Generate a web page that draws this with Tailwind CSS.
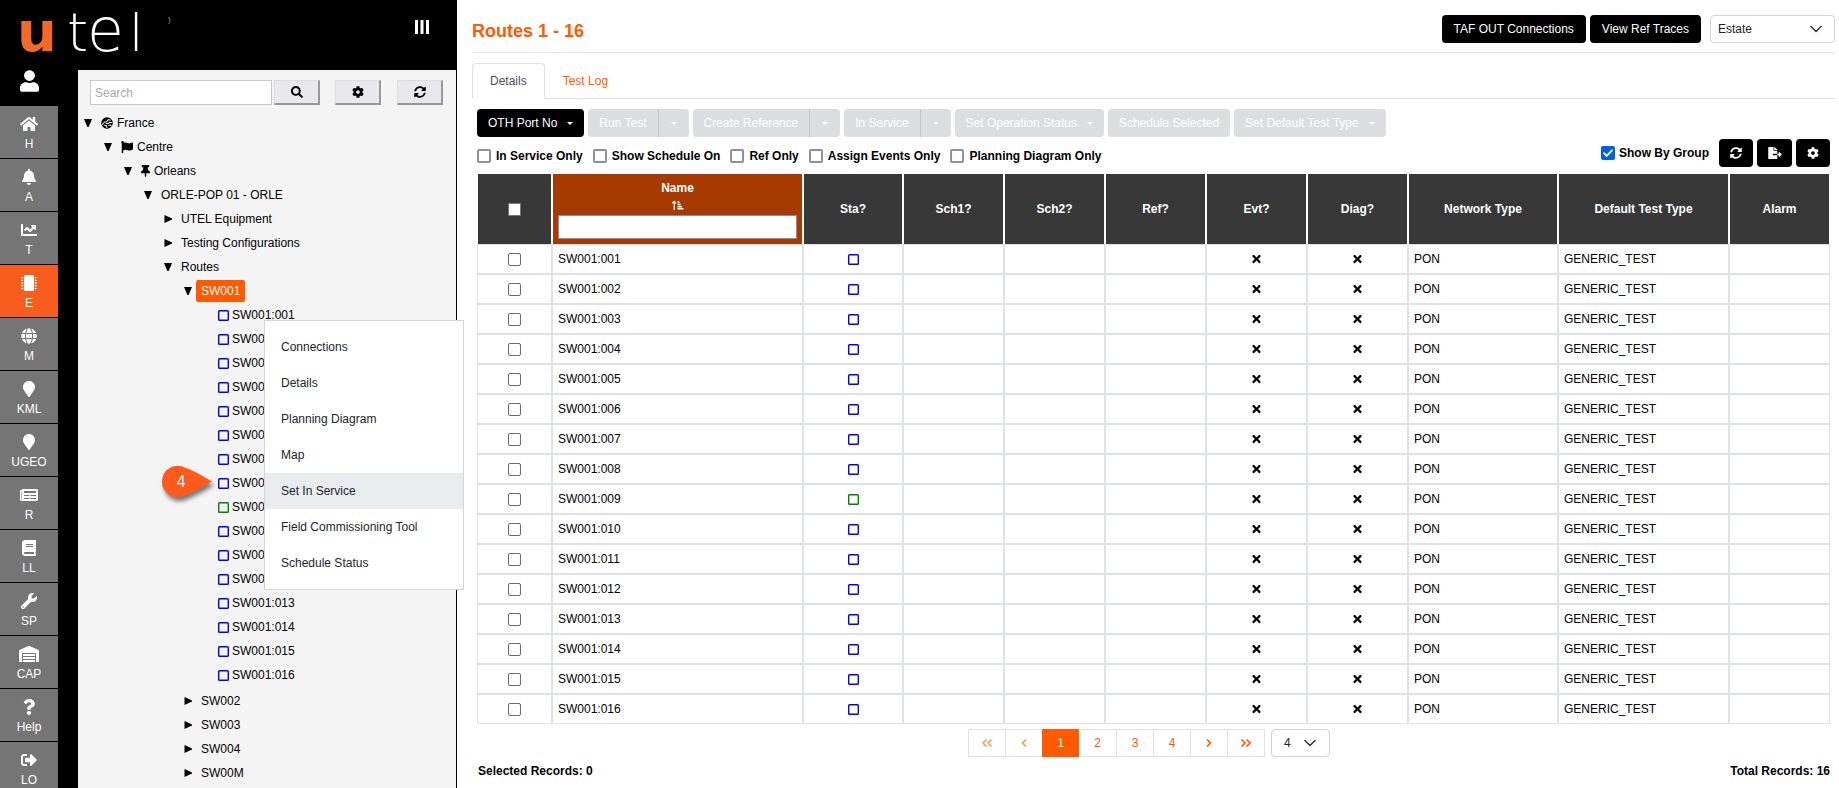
<!DOCTYPE html>
<html lang="en">
<head>
    <meta charset="UTF-8">
    <meta name="viewport" content="width=device-width, initial-scale=1.0">
    <title>utel - Routes</title>
    <script src="https://cdn.jsdelivr.net/npm/@tailwindcss/browser@4"></script>
</head>
<body class="relative flex h-screen overflow-hidden bg-white font-['Liberation_Sans',Arial,sans-serif] text-xs text-black">

    <!-- Icon sprite -->
    <svg class="hidden">
        <symbol id="i-user" viewBox="0 0 448 512"><path d="M224 256c70.7 0 128-57.3 128-128S294.7 0 224 0 96 57.3 96 128s57.3 128 128 128zm89.6 32h-16.7c-22.2 10.2-46.9 16-72.9 16s-50.6-5.8-72.9-16h-16.7C60.2 288 0 348.2 0 422.4V464c0 26.5 21.5 48 48 48h352c26.5 0 48-21.5 48-48v-41.6c0-74.2-60.2-134.4-134.4-134.4z"/></symbol>
        <symbol id="i-home" viewBox="0 0 576 512"><path d="M280.37 148.26L96 300.11V464a16 16 0 0 0 16 16l112.06-.29a16 16 0 0 0 15.92-16V368a16 16 0 0 1 16-16h64a16 16 0 0 1 16 16v95.64a16 16 0 0 0 16 16.05L464 480a16 16 0 0 0 16-16V300L295.67 148.26a12.19 12.19 0 0 0-15.3 0zM571.6 251.47L488 182.56V44.05a12 12 0 0 0-12-12h-56a12 12 0 0 0-12 12v72.61L318.47 43a48 48 0 0 0-61 0L4.34 251.47a12 12 0 0 0-1.6 16.9l25.5 31A12 12 0 0 0 45.15 301l235.22-193.74a12.19 12.19 0 0 1 15.3 0L530.9 301a12 12 0 0 0 16.9-1.6l25.5-31a12 12 0 0 0-1.7-16.93z"/></symbol>
        <symbol id="i-bell" viewBox="0 0 448 512"><path d="M224 512c35.32 0 63.97-28.65 63.97-64H160.03c0 35.35 28.65 64 63.97 64zm215.39-149.71c-19.32-20.76-55.47-51.99-55.47-154.29 0-77.7-54.48-139.9-127.94-155.16V32c0-17.67-14.32-32-31.98-32s-31.98 14.33-31.98 32v20.84C118.56 68.1 64.08 130.3 64.08 208c0 102.3-36.15 133.53-55.47 154.29-6 6.45-8.66 14.16-8.61 21.71.11 16.4 12.98 32 32.1 32h383.8c19.12 0 32-15.6 32.1-32 .05-7.55-2.61-15.27-8.61-21.71z"/></symbol>
        <symbol id="i-chart" viewBox="0 0 512 512"><path d="M496 384H64V80c0-8.84-7.16-16-16-16H16C7.16 64 0 71.16 0 80v336c0 17.67 14.33 32 32 32h464c8.84 0 16-7.16 16-16v-32c0-8.84-7.16-16-16-16zM464 96H345.94c-21.38 0-32.09 25.85-16.97 40.97l32.4 32.4L288 242.75l-73.37-73.37c-12.5-12.5-32.76-12.5-45.25 0l-68.69 68.69c-6.25 6.25-6.25 16.38 0 22.63l22.62 22.62c6.25 6.25 16.38 6.25 22.63 0L192 237.25l73.37 73.37c12.5 12.5 32.76 12.5 45.25 0l96-96 32.4 32.4c15.12 15.12 40.97 4.41 40.97-16.97V112c.01-8.84-7.15-16-15.99-16z"/></symbol>
        <symbol id="i-chip" viewBox="0 0 512 512"><rect x="96" width="320" height="512" rx="48"/><path d="M24 60h48v42H24v-8H0V68h24zm0 88h48v42H24v-8H0v-26h24zm0 87h48v42H24v-8H0v-26h24zm0 87h48v42H24v-8H0v-26h24zm0 88h48v42H24v-8H0v-26h24zM488 60h-48v42h48v-8h24V68h-24zm0 88h-48v42h48v-8h24v-26h-24zm0 87h-48v42h48v-8h24v-26h-24zm0 87h-48v42h48v-8h24v-26h-24zm0 88h-48v42h48v-8h24v-26h-24z"/></symbol>
        <symbol id="i-globe" viewBox="0 0 496 512"><path d="M336.5 160C322 70.7 287.8 8 248 8s-74 62.7-88.5 152h177zM152 256c0 22.2 1.2 43.5 3.3 64h185.3c2.1-20.5 3.3-41.8 3.3-64s-1.2-43.5-3.3-64H155.3c-2.1 20.5-3.3 41.8-3.3 64zm324.7-96c-28.6-67.9-86.5-120.4-158-141.6 24.4 33.8 41.2 84.7 50 141.6h108zM177.2 18.4C105.8 39.6 47.8 92.1 19.3 160h108c8.7-56.9 25.5-107.8 49.9-141.6zM487.4 192H372.7c2.1 21 3.3 42.5 3.3 64s-1.2 43-3.3 64h114.6c5.5-20.5 8.6-41.8 8.6-64s-3.1-43.5-8.5-64zM120 256c0-21.5 1.2-43 3.3-64H8.6C3.2 212.5 0 233.8 0 256s3.2 43.5 8.6 64h114.6c-2-21-3.2-42.5-3.2-64zm39.5 96c14.5 89.3 48.7 152 88.5 152s74-62.7 88.5-152h-177zm159.3 141.6c71.4-21.2 129.4-73.7 158-141.6h-108c-8.8 56.9-25.6 107.8-50 141.6zM19.3 352c28.6 67.9 86.5 120.4 158 141.6-24.4-33.8-41.2-84.7-50-141.6h-108z"/></symbol>
        <symbol id="i-marker" viewBox="0 0 384 512"><path d="M172.268 501.67C26.97 291.031 0 269.413 0 192 0 85.961 85.961 0 192 0s192 85.961 192 192c0 77.413-26.97 99.031-172.268 309.67-9.535 13.774-29.93 13.773-39.464 0z"/></symbol>
        <symbol id="i-news" viewBox="0 0 576 512"><path d="M552 64H88c-13.255 0-24 10.745-24 24v8H24c-13.255 0-24 10.745-24 24v272c0 30.928 25.072 56 56 56h472c26.51 0 48-21.49 48-48V88c0-13.255-10.745-24-24-24zM56 400a8 8 0 0 1-8-8V144h16v248a8 8 0 0 1-8 8zm236-16H140c-6.627 0-12-5.373-12-12v-8c0-6.627 5.373-12 12-12h152c6.627 0 12 5.373 12 12v8c0 6.627-5.373 12-12 12zm208 0H348c-6.627 0-12-5.373-12-12v-8c0-6.627 5.373-12 12-12h152c6.627 0 12 5.373 12 12v8c0 6.627-5.373 12-12 12zm-208-96H140c-6.627 0-12-5.373-12-12v-8c0-6.627 5.373-12 12-12h152c6.627 0 12 5.373 12 12v8c0 6.627-5.373 12-12 12zm208 0H348c-6.627 0-12-5.373-12-12v-8c0-6.627 5.373-12 12-12h152c6.627 0 12 5.373 12 12v8c0 6.627-5.373 12-12 12zm0-96H140c-6.627 0-12-5.373-12-12v-40c0-6.627 5.373-12 12-12h360c6.627 0 12 5.373 12 12v40c0 6.627-5.373 12-12 12z"/></symbol>
        <symbol id="i-book" viewBox="0 0 448 512"><path d="M448 360V24c0-13.3-10.7-24-24-24H96C43 0 0 43 0 96v320c0 53 43 96 96 96h328c13.3 0 24-10.7 24-24v-16c0-7.5-3.5-14.3-8.9-18.7-4.2-15.4-4.2-59.3 0-74.7 5.4-4.3 8.9-11.1 8.9-18.6zM128 134c0-3.3 2.7-6 6-6h212c3.3 0 6 2.7 6 6v20c0 3.3-2.7 6-6 6H134c-3.3 0-6-2.7-6-6v-20zm0 64c0-3.3 2.7-6 6-6h212c3.3 0 6 2.7 6 6v20c0 3.3-2.7 6-6 6H134c-3.3 0-6-2.7-6-6v-20zm253.4 250H96c-17.7 0-32-14.3-32-32 0-17.6 14.4-32 32-32h285.4c-1.9 17.1-1.9 46.9 0 64z"/></symbol>
        <symbol id="i-wrench" viewBox="0 0 512 512"><path d="M507.73 109.1c-2.24-9.03-13.54-12.09-20.12-5.51l-74.36 74.36-67.88-11.31-11.31-67.88 74.36-74.36c6.62-6.62 3.43-17.9-5.66-20.16-47.38-11.74-99.55.91-136.58 37.93-39.64 39.64-50.55 97.1-34.05 147.2L18.74 402.76c-24.99 24.99-24.99 65.51 0 90.5 24.99 24.99 65.51 24.99 90.5 0l213.21-213.21c50.12 16.71 107.47 5.68 147.37-34.22 37.07-37.07 49.7-89.32 37.91-136.73zM64 472c-13.25 0-24-10.75-24-24 0-13.26 10.75-24 24-24s24 10.74 24 24c0 13.25-10.75 24-24 24z"/></symbol>
        <symbol id="i-warehouse" viewBox="0 0 640 512"><path d="M504 352H136.4c-4.4 0-8 3.6-8 8l-.1 48c0 4.4 3.6 8 8 8H504c4.4 0 8-3.6 8-8v-48c0-4.4-3.6-8-8-8zm0 96H136.1c-4.4 0-8 3.6-8 8l-.1 48c0 4.4 3.6 8 8 8h368c4.4 0 8-3.6 8-8v-48c0-4.4-3.6-8-8-8zm0-192H136.6c-4.4 0-8 3.6-8 8l-.1 48c0 4.4 3.6 8 8 8H504c4.4 0 8-3.6 8-8v-48c0-4.4-3.6-8-8-8zm106.5-139L338.4 3.7a48.15 48.15 0 0 0-36.9 0L29.5 117C11.7 124.5 0 141.9 0 161.3V504c0 4.4 3.6 8 8 8h80c4.4 0 8-3.6 8-8V256c0-17.6 14.6-32 32.6-32h382.8c18 0 32.6 14.4 32.6 32v248c0 4.4 3.6 8 8 8h80c4.4 0 8-3.6 8-8V161.3c0-19.4-11.7-36.8-29.5-44.3z"/></symbol>
        <symbol id="i-question" viewBox="0 0 384 512"><path d="M202.021 0C122.202 0 70.503 32.703 29.914 91.026c-7.363 10.58-5.093 25.086 5.178 32.874l43.138 32.709c10.373 7.865 25.132 6.026 33.253-4.148 25.049-31.381 43.63-49.449 82.757-49.449 30.764 0 68.816 19.799 68.816 49.631 0 22.552-18.617 34.134-48.993 51.164-35.423 19.86-82.299 44.576-82.299 106.405V320c0 13.255 10.745 24 24 24h72.471c13.255 0 24-10.745 24-24v-5.773c0-42.86 125.268-44.645 125.268-160.627C377.504 66.256 286.902 0 202.021 0zM192 373.459c-38.196 0-69.271 31.075-69.271 69.271 0 38.195 31.075 69.27 69.271 69.27s69.271-31.075 69.271-69.271-31.075-69.27-69.271-69.27z"/></symbol>
        <symbol id="i-logout" viewBox="0 0 512 512"><path d="M497 273L329 441c-15 15-41 4.5-41-17v-96H152c-13.3 0-24-10.7-24-24v-96c0-13.3 10.7-24 24-24h136V88c0-21.4 25.9-32 41-17l168 168c9.3 9.4 9.3 24.6 0 34zM192 436v-40c0-6.6-5.4-12-12-12H96c-17.7 0-32-14.3-32-32V160c0-17.7 14.3-32 32-32h84c6.6 0 12-5.4 12-12V76c0-6.6-5.4-12-12-12H96c-53 0-96 43-96 96v192c0 53 43 96 96 96h84c6.6 0 12-5.4 12-12z"/></symbol>
        <symbol id="i-search" viewBox="0 0 512 512"><path d="M505 442.7L405.3 343c-4.5-4.5-10.6-7-17-7H372c27.6-35.3 44-79.7 44-128C416 93.1 322.9 0 208 0S0 93.1 0 208s93.1 208 208 208c48.3 0 92.7-16.4 128-44v16.3c0 6.4 2.5 12.5 7 17l99.7 99.7c9.4 9.4 24.6 9.4 33.9 0l28.3-28.3c9.4-9.4 9.4-24.6.1-34zM208 336c-70.7 0-128-57.2-128-128 0-70.7 57.2-128 128-128 70.7 0 128 57.2 128 128 0 70.7-57.2 128-128 128z"/></symbol>
        <symbol id="i-cog" viewBox="0 0 512 512"><path d="M487.4 315.7l-42.6-24.6c4.3-23.2 4.3-47 0-70.2l42.6-24.6c4.9-2.8 7.1-8.6 5.5-14-11.1-35.6-30-67.8-54.7-94.6-3.8-4.1-10-5.1-14.8-2.3L380.8 110c-17.9-15.4-38.5-27.3-60.8-35.1V25.8c0-5.6-3.9-10.5-9.4-11.7-36.7-8.2-74.3-7.8-109.2 0-5.5 1.2-9.4 6.1-9.4 11.7V75c-22.2 7.9-42.8 19.8-60.8 35.1L88.7 85.5c-4.9-2.8-11-1.9-14.8 2.3-24.7 26.7-43.6 58.9-54.7 94.6-1.7 5.4.6 11.2 5.5 14L67.3 221c-4.3 23.2-4.3 47 0 70.2l-42.6 24.6c-4.9 2.8-7.1 8.6-5.5 14 11.1 35.6 30 67.8 54.7 94.6 3.8 4.1 10 5.1 14.8 2.3l42.6-24.6c17.9 15.4 38.5 27.3 60.8 35.1v49.2c0 5.6 3.9 10.5 9.4 11.7 36.7 8.2 74.3 7.8 109.2 0 5.5-1.2 9.4-6.1 9.4-11.7v-49.2c22.2-7.9 42.8-19.8 60.8-35.1l42.6 24.6c4.9 2.8 11 1.9 14.8-2.3 24.7-26.7 43.6-58.9 54.7-94.6 1.5-5.5-.7-11.3-5.6-14.1zM256 336c-44.1 0-80-35.9-80-80s35.9-80 80-80 80 35.9 80 80-35.9 80-80 80z"/></symbol>
        <symbol id="i-sync" viewBox="0 0 512 512"><path d="M370.72 133.28C339.458 104.008 298.888 87.962 255.848 88c-77.458.068-144.328 53.178-162.791 126.85-1.344 5.363-6.122 9.15-11.651 9.15H24.103c-7.498 0-13.194-6.807-11.807-14.176C33.933 94.924 134.813 8 256 8c66.448 0 126.791 26.136 171.315 68.685L463.03 40.97C478.149 25.851 504 36.559 504 57.941V192c0 13.255-10.745 24-24 24H345.941c-21.382 0-32.09-25.851-16.971-40.971l41.75-41.749zM32 296h134.059c21.382 0 32.09 25.851 16.971 40.971l-41.75 41.75c31.262 29.273 71.835 45.319 114.876 45.28 77.418-.07 144.315-53.144 162.787-126.849 1.344-5.363 6.122-9.15 11.651-9.15h57.304c7.498 0 13.194 6.807 11.807 14.176C478.067 417.076 377.187 504 256 504c-66.448 0-126.791-26.136-171.315-68.685L48.97 471.03C33.851 486.149 8 475.441 8 454.059V320c0-13.255 10.745-24 24-24z"/></symbol>
        <symbol id="i-export" viewBox="0 0 576 512"><path d="M224 136V0H24C10.700 0 0 10.700 0 24v464c0 13.300 10.700 24 24 24h336c13.300 0 24-10.700 24-24V352H216c-13.300 0-24-10.700-24-24v-16c0-13.300 10.700-24 24-24h168V160H248c-13.200 0-24-10.800-24-24zm160-14.100c0-6.300-2.500-12.400-7-16.900L279.100 7c-4.500-4.500-10.600-7-17-7H256v128h128zM571 308l-95.700-96.400c-10.100-10.100-27.400-3-27.400 11.300V288h-64v64h64v65.200c0 14.300 17.300 21.400 27.400 11.300L571 332c6.600-6.600 6.600-17.400 0-24z"/></symbol>
        <symbol id="i-pin" viewBox="0 0 384 512"><path d="M298.028 214.267L285.793 96H328c13.255 0 24-10.745 24-24V24c0-13.255-10.745-24-24-24H56C42.745 0 32 10.745 32 24v48c0 13.255 10.745 24 24 24h42.207L85.972 214.267C37.465 236.82 0 277.261 0 328c0 13.255 10.745 24 24 24h136v104.007c0 1.242.289 2.467.845 3.578l24 48c2.941 5.882 11.364 5.893 14.311 0l24-48a8.008 8.008 0 0 0 .845-3.578V352h136c13.255 0 24-10.745 24-24-.001-51.183-37.983-91.42-85.973-113.733z"/></symbol>
        <symbol id="i-flag" viewBox="0 0 512 512"><path d="M349.565 98.783C295.978 98.783 251.721 64 184.348 64c-24.955 0-47.309 4.384-68.045 12.013a55.947 55.947 0 0 0 3.586-23.562C118.117 24.015 94.806 1.206 66.338.048 34.345-1.254 8 24.296 8 56c0 19.026 9.497 35.825 24 45.945V488c0 13.255 10.745 24 24 24h16c13.255 0 24-10.745 24-24v-94.4c28.311-12.064 63.582-22.122 114.435-22.122 53.588 0 97.844 34.783 165.217 34.783 48.169 0 86.667-16.294 122.505-40.858C506.84 359.452 512 349.571 512 339.045v-243.1c0-23.393-24.269-38.87-45.485-29.016-34.338 15.948-76.454 31.854-116.95 31.854z"/></symbol>
        <symbol id="i-earth" viewBox="0 0 12 12"><circle cx="6" cy="6" r="5.800"/><path d="M1.500 7.500l2-2.500 2.200-.2L7 2.800l2.300.2M5 6.300l2.500.2 1.200-1.300 2 .3M3.500 8.200l1.800.3.500 2M7.800 8.200l2.200.2" fill="none" stroke="#f4f4f4" stroke-width="1.100" stroke-linecap="round" stroke-linejoin="round"/></symbol>
        <symbol id="i-times" viewBox="0 0 352 512"><path d="M242.72 256l100.07-100.07c12.28-12.28 12.28-32.19 0-44.48l-22.24-22.24c-12.28-12.28-32.19-12.28-44.48 0L176 189.28 75.93 89.21c-12.28-12.28-32.19-12.28-44.48 0L9.21 111.45c-12.28 12.28-12.28 32.19 0 44.48L109.28 256 9.21 356.07c-12.28 12.28-12.28 32.19 0 44.48l22.24 22.24c12.28 12.28 32.2 12.28 44.48 0L176 322.72l100.07 100.07c12.28 12.28 32.2 12.28 44.48 0l22.24-22.24c12.28-12.28 12.28-32.19 0-44.48L242.72 256z"/></symbol>
        <symbol id="i-square" viewBox="0 0 11 11"><rect x=".7" y=".7" width="9.600" height="9.600" rx=".8" fill="none" stroke="currentColor" stroke-width="1.400"/></symbol>
        <symbol id="i-caret" viewBox="0 0 6 3"><path d="M0 0h6L3 3z"/></symbol>
        <symbol id="i-open" viewBox="0 0 8 8"><path d="M0 0h8L4.600 8H3.400z"/></symbol>
        <symbol id="i-closed" viewBox="0 0 8 8"><path d="M.5 0L8 3.500v1L.5 8z"/></symbol>
        <symbol id="i-chevron" viewBox="0 0 12 8"><path d="M1 1.500l5 5 5-5" fill="none" stroke="#343a40" stroke-width="1.600" stroke-linecap="round" stroke-linejoin="round"/></symbol>
        <symbol id="i-sort" viewBox="0 0 12 10"><path d="M2.200 10V1.500M.4 3.300l1.800-2 1.800 2" fill="none" stroke="currentColor" stroke-width="1.200"/><path d="M5.500 1.500H7.500V3h-2zM5.500 3.700h3.200v1.500H5.500zM5.500 5.900h4.500v1.500H5.500zM5.500 8.100h6v1.500h-6z"/></symbol>
        <symbol id="i-left" viewBox="0 0 10 8"><path d="M7 .5L3.500 4 7 7.500" fill="none" stroke="currentColor" stroke-width="1.400"/></symbol>
        <symbol id="i-right" viewBox="0 0 10 8"><path d="M3 .5L6.500 4 3 7.500" fill="none" stroke="currentColor" stroke-width="1.600"/></symbol>
        <symbol id="i-first" viewBox="0 0 10 8"><path d="M4.500 .5L1 4l3.500 3.500M9.500 .5L6 4l3.500 3.500" fill="none" stroke="currentColor" stroke-width="1.400"/></symbol>
        <symbol id="i-last" viewBox="0 0 10 8"><path d="M.5 .5L4 4 .5 7.500M5.500 .5L9 4 5.500 7.500" fill="none" stroke="currentColor" stroke-width="1.600"/></symbol>
    </svg>

    <!-- Left side -->
    <aside class="flex w-[457px] shrink-0 flex-col overflow-hidden bg-black pr-px">
        <header class="flex h-[70px] shrink-0 items-start justify-between pr-[27px]">
            <div class="flex">
                <svg class="h-[70px] w-[168px] overflow-visible" role="img" aria-label="utel">
                    <text x="17" y="51" fill="#f26a25" font-family="DejaVu Sans" font-size="56" font-weight="700">u</text>
                    <text x="67" y="51" fill="#ffffff" font-family="DejaVu Sans" font-size="54" font-weight="200">t</text>
                    <text x="87" y="51" fill="#ffffff" font-family="DejaVu Sans" font-size="60" font-weight="200">e</text>
                    <text x="129" y="51" fill="#ffffff" font-family="DejaVu Sans" font-size="52" font-weight="200">l</text>
                </svg>
                <span class="mt-4 text-[8px] leading-none text-gray-400">)</span>
            </div>
            <button class="mt-5" aria-label="Toggle menu">
                <svg class="h-[14px] w-[14px] fill-white" viewBox="0 0 14 14"><path d="M0 0h3v14H0zM5.500 0h3v14h-3zM11 0h3v14h-3z"/></svg>
            </button>
        </header>
        <div class="flex min-h-0 flex-1">
            <nav id="nav" class="flex w-[58px] shrink-0 flex-col gap-px text-white">
                <a href="#" class="flex h-[35px] shrink-0 justify-center" aria-label="User"><svg class="h-[22px] w-[19px] fill-white"><use href="#i-user"/></svg></a>
            </nav>
            <section class="ml-5 flex-1 overflow-hidden bg-[#f4f4f4] pt-[10px]">
                <form class="flex h-[25px] pr-[13px] pl-3">
                    <input type="text" placeholder="Search" aria-label="Search" class="min-w-0 flex-1 border border-[#c8c8c8] bg-white px-1 placeholder:text-[#a9a9a9]">
                    <button type="button" aria-label="Search" class="ml-[2px] flex w-[46px] items-center justify-center border-t border-r-2 border-b-2 border-l border-t-[#dcdce0] border-r-[#98989c] border-b-[#98989c] border-l-[#dcdce0] bg-[#e9e9ed]"><svg class="h-3 w-3"><use href="#i-search"/></svg></button>
                    <button type="button" aria-label="Settings" class="ml-[15px] flex w-[46px] items-center justify-center border-t border-r-2 border-b-2 border-l border-t-[#dcdce0] border-r-[#98989c] border-b-[#98989c] border-l-[#dcdce0] bg-[#e9e9ed]"><svg class="h-3 w-3"><use href="#i-cog"/></svg></button>
                    <button type="button" aria-label="Refresh" class="ml-4 flex w-[46px] items-center justify-center border-t border-r-2 border-b-2 border-l border-t-[#dcdce0] border-r-[#98989c] border-b-[#98989c] border-l-[#dcdce0] bg-[#e9e9ed]"><svg class="h-3 w-3"><use href="#i-sync"/></svg></button>
                </form>
                <!-- Tree -->
                <ul class="mt-[6px] pl-[6px] leading-6 [&_ul]:pl-5">
                    <li>
                        <div class="flex h-6 items-center"><svg class="h-2 w-2"><use href="#i-open"/></svg><svg class="mr-1 ml-[9px] h-3 w-3"><use href="#i-earth"/></svg>France</div>
                        <ul>
                            <li>
                                <div class="flex h-6 items-center"><svg class="h-2 w-2"><use href="#i-open"/></svg><svg class="mr-1 ml-[9px] h-3 w-3"><use href="#i-flag"/></svg>Centre</div>
                                <ul>
                                    <li>
                                        <div class="flex h-6 items-center"><svg class="h-2 w-2"><use href="#i-open"/></svg><svg class="mr-1 ml-[9px] h-3 w-[9px]"><use href="#i-pin"/></svg>Orleans</div>
                                        <ul>
                                            <li>
                                                <div class="flex h-6 items-center gap-[9px]"><svg class="h-2 w-2"><use href="#i-open"/></svg>ORLE-POP 01 - ORLE</div>
                                                <ul>
                                                    <li class="flex h-6 items-center gap-[9px]"><svg class="h-2 w-2"><use href="#i-closed"/></svg>UTEL Equipment</li>
                                                    <li class="flex h-6 items-center gap-[9px]"><svg class="h-2 w-2"><use href="#i-closed"/></svg>Testing Configurations</li>
                                                    <li>
                                                        <div class="flex h-6 items-center gap-[9px]"><svg class="h-2 w-2"><use href="#i-open"/></svg>Routes</div>
                                                        <ul id="switches">
                                                            <li class="mb-[2px]">
                                                                <div class="flex h-6 items-center gap-1"><svg class="h-2 w-2"><use href="#i-open"/></svg><span class="rounded-xs bg-[#ff5a00] px-[5px] leading-[22px] text-white">SW001</span></div>
                                                                <div id="routes" class="pl-[34px]"></div>
                                                            </li>
                                                        </ul>
                                                    </li>
                                                </ul>
                                            </li>
                                        </ul>
                                    </li>
                                </ul>
                            </li>
                        </ul>
                    </li>
                </ul>
            </section>
        </div>
    </aside>

    <!-- Right side -->
    <main class="min-w-0 flex-1 pr-1 pl-[15px]">
        <div class="flex h-[53px] items-start border-b border-[#e9e9e9] pt-[15px]">
            <h1 class="mr-auto text-lg leading-8 font-bold text-[#ff5a00]">Routes 1 - 16</h1>
            <button class="h-7 rounded bg-black px-3 text-white">TAF OUT Connections</button>
            <button class="ml-1 h-7 rounded bg-black px-3 text-white">View Ref Traces</button>
            <div class="relative ml-[9px] w-[125px]">
                <select aria-label="View" class="h-7 w-full appearance-none rounded border border-[#ced4da] bg-white px-[7px] text-[#212529]"><option>Estate</option></select>
                <svg class="pointer-events-none absolute top-[10px] right-[13px] h-2 w-3"><use href="#i-chevron"/></svg>
            </div>
        </div>

        <div class="mt-[10px] flex h-9 border-b border-[#dee2e6]" role="tablist">
            <a href="#" class="-mb-px rounded-t border border-[#dee2e6] border-b-white bg-white px-[17px] leading-[34px] text-[#495057]">Details</a>
            <a href="#" class="border border-transparent px-[17px] leading-[34px] text-[#ff5a00]">Test Log</a>
        </div>

        <div class="px-[5px] pt-[10px]">
            <div class="flex gap-1 text-white">
                <button class="flex h-7 items-center gap-[10px] rounded bg-black px-[11px]">OTH Port No <svg class="h-[3px] w-[6px] fill-white"><use href="#i-caret"/></svg></button>
                <div class="flex">
                    <button disabled class="h-7 rounded-l bg-[#dcdddf] px-[11px]">Run Test</button>
                    <button disabled aria-label="Run test options" class="flex h-7 w-[31px] items-center justify-center rounded-r border-l border-[#c3c5c8] bg-[#dcdddf]"><svg class="h-[3px] w-[6px] fill-white"><use href="#i-caret"/></svg></button>
                </div>
                <div class="flex">
                    <button disabled class="h-7 rounded-l bg-[#dcdddf] px-[11px]">Create Reference</button>
                    <button disabled aria-label="Create reference options" class="flex h-7 w-[31px] items-center justify-center rounded-r border-l border-[#c3c5c8] bg-[#dcdddf]"><svg class="h-[3px] w-[6px] fill-white"><use href="#i-caret"/></svg></button>
                </div>
                <div class="flex">
                    <button disabled class="h-7 rounded-l bg-[#dcdddf] px-[11px]">In Service</button>
                    <button disabled aria-label="In service options" class="flex h-7 w-[31px] items-center justify-center rounded-r border-l border-[#c3c5c8] bg-[#dcdddf]"><svg class="h-[3px] w-[6px] fill-white"><use href="#i-caret"/></svg></button>
                </div>
                <button disabled class="flex h-7 items-center gap-[10px] rounded bg-[#dcdddf] px-[11px]">Set Operation Status <svg class="h-[3px] w-[6px] fill-white"><use href="#i-caret"/></svg></button>
                <button disabled class="h-7 rounded bg-[#dcdddf] px-[11px]">Schedule Selected</button>
                <button disabled class="flex h-7 items-center gap-[10px] rounded bg-[#dcdddf] px-[11px]">Set Default Test Type <svg class="h-[3px] w-[6px] fill-white"><use href="#i-caret"/></svg></button>
            </div>

            <div class="mt-[2px] flex h-7 items-center font-bold">
                <div class="mr-auto flex gap-[10px] pt-[6px]">
                    <label class="flex items-center gap-[5px]"><input type="checkbox" class="h-[14px] w-[14px] appearance-none rounded-xs border-2 border-[#8f8f9d] bg-white">In Service Only</label>
                    <label class="flex items-center gap-[5px]"><input type="checkbox" class="h-[14px] w-[14px] appearance-none rounded-xs border-2 border-[#8f8f9d] bg-white">Show Schedule On</label>
                    <label class="flex items-center gap-[5px]"><input type="checkbox" class="h-[14px] w-[14px] appearance-none rounded-xs border-2 border-[#8f8f9d] bg-white">Ref Only</label>
                    <label class="flex items-center gap-[5px]"><input type="checkbox" class="h-[14px] w-[14px] appearance-none rounded-xs border-2 border-[#8f8f9d] bg-white">Assign Events Only</label>
                    <label class="flex items-center gap-[5px]"><input type="checkbox" class="h-[14px] w-[14px] appearance-none rounded-xs border-2 border-[#8f8f9d] bg-white">Planning Diagram Only</label>
                </div>
                <label class="mr-[10px] flex items-center gap-1">
                    <span class="relative flex">
                        <input type="checkbox" checked class="h-[14px] w-[14px] appearance-none rounded-xs bg-[#0060df]">
                        <svg class="pointer-events-none absolute top-0 left-0 h-[14px] w-[14px]" viewBox="0 0 14 14"><path d="M3 7.200l2.700 2.700L11 4.300" fill="none" stroke="#fff" stroke-width="1.800" stroke-linecap="round"/></svg>
                    </span>
                    Show By Group
                </label>
                <div class="flex gap-1">
                    <button aria-label="Refresh" class="flex h-7 w-[34px] items-center justify-center rounded bg-black"><svg class="h-3 w-3 fill-white"><use href="#i-sync"/></svg></button>
                    <button aria-label="Export" class="flex h-7 w-[35px] items-center justify-center rounded bg-black"><svg class="h-3 w-[14px] fill-white"><use href="#i-export"/></svg></button>
                    <button aria-label="Settings" class="flex h-7 w-[34px] items-center justify-center rounded bg-black"><svg class="h-3 w-3 fill-white"><use href="#i-cog"/></svg></button>
                </div>
            </div>

            <table class="mt-[7px] w-full table-fixed border-separate border-spacing-0">
                <colgroup>
                    <col class="w-[75px]"><col class="w-[251px]"><col class="w-[100px]"><col class="w-[101px]"><col class="w-[101px]"><col class="w-[101px]"><col class="w-[101px]"><col class="w-[101px]"><col class="w-[150px]"><col class="w-[171px]"><col class="w-[101px]">
                </colgroup>
                <thead>
                    <tr class="h-[70px] text-white [&>th]:border-x [&>th]:border-white">
                        <th class="bg-[#383838]"><input type="checkbox" aria-label="Select all" class="mx-auto block h-[13px] w-[13px] appearance-none border border-[#767676] bg-white"></th>
                        <th class="bg-[#a73a00] px-[5px] pt-[7px] pb-[5px] leading-[14px]">
                            Name
                            <svg class="mx-auto mt-[5px] h-[10px] w-3 fill-white"><use href="#i-sort"/></svg>
                            <input type="text" aria-label="Filter name" class="mt-[5px] block h-6 w-full border border-[#8f8f9d] bg-white px-1 font-normal text-black">
                        </th>
                        <th class="bg-[#383838]">Sta?</th>
                        <th class="bg-[#383838]">Sch1?</th>
                        <th class="bg-[#383838]">Sch2?</th>
                        <th class="bg-[#383838]">Ref?</th>
                        <th class="bg-[#383838]">Evt?</th>
                        <th class="bg-[#383838]">Diag?</th>
                        <th class="bg-[#383838]">Network Type</th>
                        <th class="bg-[#383838]">Default Test Type</th>
                        <th class="bg-[#383838]">Alarm</th>
                    </tr>
                </thead>
                <tbody id="rows"></tbody>
            </table>

            <div class="mt-[5px] flex justify-center gap-[6px] pr-[9px]">
                <nav class="flex border-r border-[#dee2e6] text-[#ff5a00]" aria-label="Pages">
                    <button disabled aria-label="First" class="flex h-7 w-[37px] items-center justify-center border-y border-l border-[#dee2e6] text-[#ff5a00]/70"><svg class="h-2 w-[10px]"><use href="#i-first"/></svg></button>
                    <button disabled aria-label="Previous" class="flex h-7 w-[37px] items-center justify-center border-y border-l border-[#dee2e6] text-[#ff5a00]/70"><svg class="h-2 w-[10px]"><use href="#i-left"/></svg></button>
                    <button class="h-7 w-[37px] bg-[#ff5a00] text-white">1</button>
                    <button class="h-7 w-[37px] border-y border-[#dee2e6]">2</button>
                    <button class="h-7 w-[37px] border-y border-l border-[#dee2e6]">3</button>
                    <button class="h-7 w-[37px] border-y border-l border-[#dee2e6]">4</button>
                    <button aria-label="Next" class="flex h-7 w-[37px] items-center justify-center border-y border-l border-[#dee2e6]"><svg class="h-2 w-[10px]"><use href="#i-right"/></svg></button>
                    <button aria-label="Last" class="flex h-7 w-[37px] items-center justify-center border-y border-l border-[#dee2e6]"><svg class="h-2 w-[10px]"><use href="#i-last"/></svg></button>
                </nav>
                <div class="relative w-[59px]">
                    <select aria-label="Page" class="h-7 w-full appearance-none rounded border border-[#ced4da] bg-white px-3 text-[#212529]"><option>4</option></select>
                    <svg class="pointer-events-none absolute top-[10px] right-[14px] h-2 w-3"><use href="#i-chevron"/></svg>
                </div>
            </div>
            <div class="mt-[6px] flex justify-between pl-px font-bold">
                <span>Selected Records: 0</span>
                <span>Total Records: 16</span>
            </div>
        </div>
    </main>

    <!-- Step marker -->
    <svg class="absolute top-[461px] left-[155px] h-[48px] w-[62px] drop-shadow-[2px_4px_2px_rgba(0,0,0,0.5)]" viewBox="0 0 62 48">
        <path d="M57 20.500C48 15 38 9.500 30 6.500A15.800 15.800 0 1 0 30 34.500C38 31.500 48 26 57 20.500z" fill="#ff5a1e"/>
        <text x="26" y="26" text-anchor="middle" font-size="16" fill="#fff">4</text>
    </svg>

    <!-- Context menu -->
    <ul id="menu" class="absolute top-[320px] left-[264px] w-[200px] border border-[#d3d5d7] bg-white py-2 leading-9 text-[#212529]"></ul>

    <script>
        const navItems = [
            ['home', 'H', 'w-[18px]'], ['bell', 'A', 'w-[14px]'], ['chart', 'T', 'w-4'], ['chip', 'E', 'w-4'],
            ['globe', 'M', 'w-4'], ['marker', 'KML', 'w-3'], ['marker', 'UGEO', 'w-3'], ['news', 'R', 'w-[18px]'],
            ['book', 'LL', 'w-[14px]'], ['wrench', 'SP', 'w-4'], ['warehouse', 'CAP', 'w-5'],
            ['question', 'Help', 'w-3'], ['logout', 'LO', 'w-4']
        ];
        const menuItems = ['Connections', 'Details', 'Planning Diagram', 'Map', 'Set In Service', 'Field Commissioning Tool', 'Schedule Status'];

        // Side navigation
        navItems.forEach(([icon, label, width]) => {
            const bg = label === 'E' ? 'bg-[#f95d1d]' : 'bg-[#757575]';
            document.getElementById('nav').insertAdjacentHTML('beforeend', `
                <a href="#" class="flex h-[52px] shrink-0 flex-col items-center gap-1 pt-[10px] ${bg}">
                    <svg class="h-4 ${width} fill-white"><use href="#i-${icon}"/></svg>${label}
                </a>`);
        });

        // Routes: tree leaves and table rows
        for (let i = 1; i <= 16; i++) {
            const name = `SW001:${String(i).padStart(3, '0')}`;
            const color = i === 9 ? 'text-[#008000]' : 'text-[#0000ff]';

            document.getElementById('routes').insertAdjacentHTML('beforeend', `
                <div class="flex h-6 items-center gap-[3px]"><svg class="h-[11px] w-[11px] ${color}"><use href="#i-square"/></svg>${name}</div>`);

            document.getElementById('rows').insertAdjacentHTML('beforeend', `
                <tr class="h-[30px] [&>td]:border [&>td]:border-[#dee2e6] [&>td]:px-[5px]">
                    <td><input type="checkbox" aria-label="Select ${name}" class="mx-auto block h-[13px] w-[13px] appearance-none rounded-xs border border-[#6b6b6b] bg-white"></td>
                    <td>${name}</td>
                    <td><svg class="mx-auto h-[11px] w-[11px] ${color}"><use href="#i-square"/></svg></td>
                    <td></td>
                    <td></td>
                    <td></td>
                    <td><svg class="mx-auto h-3 w-[9px]"><use href="#i-times"/></svg></td>
                    <td><svg class="mx-auto h-3 w-[9px]"><use href="#i-times"/></svg></td>
                    <td>PON</td>
                    <td>GENERIC_TEST</td>
                    <td></td>
                </tr>`);
        }

        // Collapsed switches
        ['SW002', 'SW003', 'SW004', 'SW00M'].forEach(name => {
            document.getElementById('switches').insertAdjacentHTML('beforeend', `
                <li class="flex h-6 items-center gap-[9px]"><svg class="h-2 w-2"><use href="#i-closed"/></svg>${name}</li>`);
        });

        // Context menu
        menuItems.forEach(item => {
            const bg = item === 'Set In Service' ? 'bg-[#e9ecef]' : 'bg-white';
            document.getElementById('menu').insertAdjacentHTML('beforeend', `
                <li><button class="block w-full px-4 text-left ${bg}">${item}</button></li>`);
        });
    </script>
</body>
</html>
